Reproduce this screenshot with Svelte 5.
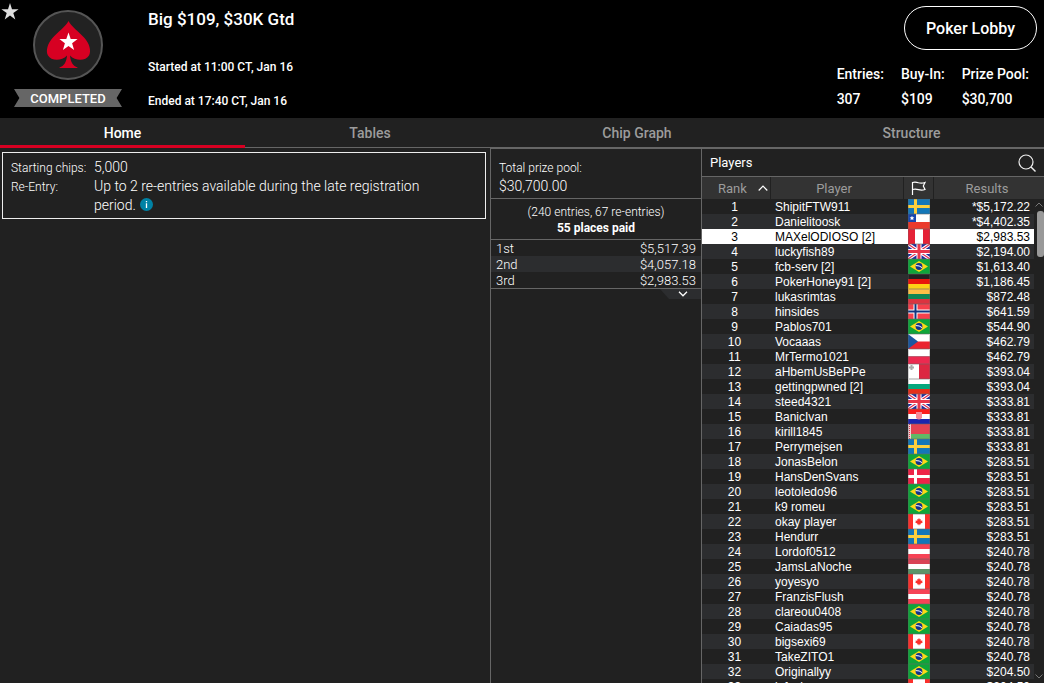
<script lang="ts">
  type Player = { name: string; flag: string; result: string };

  const tabs = ['Home', 'Tables', 'Chip Graph', 'Structure'];
  let activeTab = $state('Home');
  let selectedRank = $state(3);

  const summary = [
    { label: 'Entries:', value: '307' },
    { label: 'Buy-In:', value: '$109' },
    { label: 'Prize Pool:', value: '$30,700' },
  ];

  const payouts = [
    { place: '1st', amount: '$5,517.39' },
    { place: '2nd', amount: '$4,057.18' },
    { place: '3rd', amount: '$2,983.53' },
  ];

  const players: Player[] = [
    { name: 'ShipitFTW911', flag: 'se', result: '*$5,172.22' },
    { name: 'Danielitoosk', flag: 'cl', result: '*$4,402.35' },
    { name: 'MAXelODIOSO [2]', flag: 'pe', result: '$2,983.53' },
    { name: 'luckyfish89', flag: 'gb', result: '$2,194.00' },
    { name: 'fcb-serv [2]', flag: 'br', result: '$1,613.40' },
    { name: 'PokerHoney91 [2]', flag: 'de', result: '$1,186.45' },
    { name: 'lukasrimtas', flag: 'lt', result: '$872.48' },
    { name: 'hinsides', flag: 'no', result: '$641.59' },
    { name: 'Pablos701', flag: 'br', result: '$544.90' },
    { name: 'Vocaaas', flag: 'cz', result: '$462.79' },
    { name: 'MrTermo1021', flag: 'pl', result: '$462.79' },
    { name: 'aHbemUsBePPe', flag: 'mt', result: '$393.04' },
    { name: 'gettingpwned [2]', flag: 'bg', result: '$393.04' },
    { name: 'steed4321', flag: 'gb', result: '$333.81' },
    { name: 'BanicIvan', flag: 'hr', result: '$333.81' },
    { name: 'kirill1845', flag: 'by', result: '$333.81' },
    { name: 'Perrymejsen', flag: 'se', result: '$333.81' },
    { name: 'JonasBelon', flag: 'br', result: '$283.51' },
    { name: 'HansDenSvans', flag: 'dk', result: '$283.51' },
    { name: 'leotoledo96', flag: 'br', result: '$283.51' },
    { name: 'k9 romeu', flag: 'br', result: '$283.51' },
    { name: 'okay player', flag: 'ca', result: '$283.51' },
    { name: 'Hendurr', flag: 'se', result: '$283.51' },
    { name: 'Lordof0512', flag: 'at', result: '$240.78' },
    { name: 'JamsLaNoche', flag: 'hu', result: '$240.78' },
    { name: 'yoyesyo', flag: 'ca', result: '$240.78' },
    { name: 'FranzisFlush', flag: 'at', result: '$240.78' },
    { name: 'clareou0408', flag: 'br', result: '$240.78' },
    { name: 'Caiadas95', flag: 'br', result: '$240.78' },
    { name: 'bigsexi69', flag: 'ca', result: '$240.78' },
    { name: 'TakeZITO1', flag: 'br', result: '$240.78' },
    { name: 'Originallyy', flag: 'br', result: '$204.50' },
    { name: 'jofosho', flag: 'ca', result: '$204.50' },
  ];

  // Horizontal bands, top to bottom
  const bands: Record<string, string[]> = {
    de: ['#222', '#e8150c', '#fdd116'],
    lt: ['#fdbf47', '#108654', '#dc3340'],
    pl: ['#fff', '#ec2a50'],
    bg: ['#fff', '#04a77c', '#e5301b'],
    hr: ['#fc1c1c', '#fff', '#1c25ae'],
    at: ['#f64356', '#fff', '#f64356'],
    hu: ['#d94356', '#fff', '#5b9468'],
  };

  // Nordic crosses: field, cross and optional inner cross
  const crosses: Record<string, string[]> = {
    se: ['#1477b8', '#fccf3d'],
    dk: ['#ee2348', '#fff'],
    no: ['#f6404c', '#fff', '#10357f'],
  };
</script>

{#snippet flagIcon(code: string)}
  <svg class="flag" viewBox="0 0 22 15" preserveAspectRatio="none" aria-hidden="true">
    {#if bands[code]}
      {#each bands[code] as color, i}
        <rect y={(15 / bands[code].length) * i} width="22" height={15 / bands[code].length} fill={color} />
      {/each}
      {#if code === 'hr'}
        <path d="M8 3h6v6q-3 3-6 0z" fill="#f58a98" />
      {/if}
    {:else if crosses[code]}
      <rect width="22" height="15" fill={crosses[code][0]} />
      <path d="M7.5 0v15M0 7.5h22" stroke={crosses[code][1]} stroke-width={code === 'no' ? 4 : 3} />
      {#if crosses[code][2]}
        <path d="M7.5 0v15M0 7.5h22" stroke={crosses[code][2]} stroke-width="2" />
      {/if}
    {:else if code === 'cl'}
      <rect width="22" height="15" fill="#fff" />
      <rect y="8" width="22" height="7" fill="#ea3a2c" />
      <rect width="8" height="8" fill="#1646ae" />
      <path d="M4 1.8l.7 1.5 1.7.1-1.3 1.1.4 1.7L4 5.3l-1.5.9.4-1.7-1.3-1.1 1.7-.1z" fill="#fff" />
    {:else if code === 'pe'}
      <rect width="22" height="15" fill="#e52237" />
      <rect x="7" width="8" height="15" fill="#fff" />
    {:else if code === 'gb'}
      <rect width="22" height="15" fill="#1d2c9c" />
      <path d="M0 0l22 15M22 0L0 15" stroke="#fff" stroke-width="3.4" />
      <path d="M0 0l22 15M22 0L0 15" stroke="#e0284a" stroke-width="1.1" />
      <path d="M11 0v15M0 7.5h22" stroke="#fff" stroke-width="5" />
      <path d="M11 0v15M0 7.5h22" stroke="#e8354a" stroke-width="3" />
    {:else if code === 'br'}
      <rect width="22" height="15" fill="#0fa53a" />
      <path d="M11 2l9 5.5-9 5.5-9-5.5z" fill="#fbd918" />
      <circle cx="11" cy="7.5" r="3.4" fill="#12328c" />
      <path d="M7.8 6.6q3.6-.3 6.2 2" stroke="#fff" stroke-width="1" fill="none" />
    {:else if code === 'cz'}
      <rect width="22" height="15" fill="#fff" />
      <rect y="7.5" width="22" height="7.5" fill="#ea2430" />
      <path d="M0 0l10 7.5L0 15z" fill="#1b569e" />
    {:else if code === 'mt'}
      <rect width="22" height="15" fill="#fff" />
      <rect x="11" width="11" height="15" fill="#dc2742" />
      <path d="M3.5 1v5M1 3.5h5" stroke="#aaa" stroke-width="2" />
    {:else if code === 'by'}
      <rect width="22" height="15" fill="#e44352" />
      <rect y="10" width="22" height="5" fill="#60b966" />
      <rect width="3" height="15" fill="#f4d4d6" />
      <path d="M1.5 0v15" stroke="#d83a4b" stroke-dasharray="1 1" />
    {:else if code === 'ca'}
      <rect width="22" height="15" fill="#fff" />
      <path d="M0 0h5v15H0zM17 0h5v15h-5z" fill="#fb302c" />
      <path
        d="M11 4l.9 1.4.9-.3-.1 1.6 1.8-.2-.4 1 .8.7-2.4 1.6.1.8-1.4-.2v1h-.4v-1l-1.4.2.1-.8-2.4-1.6.8-.7-.4-1 1.8.2-.1-1.6.9.3z"
        fill="#fb302c"
      />
    {/if}
    <rect x=".5" y=".5" width="21" height="14" fill="none" stroke="#666" stroke-opacity=".3" />
  </svg>
{/snippet}

<div class="lobby">
  <header class="top">
    <button type="button" class="favorite" aria-label="Add to favorites">
      <svg width="18" height="18" viewBox="0 0 18 18" aria-hidden="true">
        <path d="M9 0l2 6.2h6.6l-5.3 3.9 2 6.4L9 12.6l-5.3 3.9 2-6.4L.4 6.2H7z" fill="#dedede" />
      </svg>
    </button>

    <div class="badge">
      <svg width="70" height="70" viewBox="0 0 70 70" aria-hidden="true">
        <circle cx="35" cy="35" r="34" fill="#222" stroke="#555" stroke-width="2" />
        <path
          d="M35.5 11C38 16 46 22 51.5 28C56.5 33.5 58.5 41 56 45.5C53 51 42.5 51.5 37 45.5C37.5 52 40 56 44.5 57.5V58H26.5V57.5C31 56 33.5 52 34 45.5C28.5 51.5 18 51 15 45.5C12.5 41 14.5 33.5 19.5 28C25 22 33 16 35.5 11Z"
          fill="#d70022"
        />
        <path d="M35.5 22.5l2.2 6.5h6.9l-5.5 4.2 2 6.8-5.6-4.1-5.6 4.1 2-6.8-5.5-4.2h6.9z" fill="#fff" />
      </svg>
      <span class="status">COMPLETED</span>
    </div>

    <div class="details">
      <h1>Big $109, $30K Gtd</h1>
      <p>Started at 11:00 CT, Jan 16</p>
      <p>Ended at 17:40 CT, Jan 16</p>
    </div>

    <div class="overview">
      <button type="button" class="lobby-button">Poker Lobby</button>
      <dl class="summary">
        {#each summary as item}
          <div>
            <dt>{item.label}</dt>
            <dd>{item.value}</dd>
          </div>
        {/each}
      </dl>
    </div>
  </header>

  <nav class="tabs">
    {#each tabs as tab}
      <button type="button" class:active={activeTab === tab} onclick={() => (activeTab = tab)}>{tab}</button>
    {/each}
  </nav>

  <main class="content">
    <section class="info">
      <dl class="rules">
        <dt>Starting chips:</dt>
        <dd>5,000</dd>
        <dt>Re-Entry:</dt>
        <dd>
          Up to 2 re-entries available during the late registration period.
          <button type="button" class="hint" aria-label="Re-entry information">
            <svg width="13" height="13" viewBox="0 0 13 13" aria-hidden="true">
              <circle cx="6.5" cy="6.5" r="6.5" fill="#0082a5" />
              <path d="M6.5 5.3V10M6.5 3v1.3" stroke="#fff" stroke-width="1.3" />
            </svg>
          </button>
        </dd>
      </dl>
    </section>

    <section class="prizes">
      <div class="pool">
        <p class="pool-label">Total prize pool:</p>
        <p>$30,700.00</p>
      </div>
      <div class="entries">
        <p>(240 entries, 67 re-entries)</p>
        <p><strong>55 places paid</strong></p>
      </div>
      <table class="payouts">
        <tbody>
          {#each payouts as payout}
            <tr>
              <td>{payout.place}</td>
              <td>{payout.amount}</td>
            </tr>
          {/each}
        </tbody>
      </table>
      <button type="button" class="expand" aria-label="Show all payouts">
        <svg width="10" height="6" viewBox="0 0 10 6" aria-hidden="true">
          <path d="M1 .8l4 4 4-4" fill="none" stroke="#fff" stroke-width="1.3" />
        </svg>
      </button>
    </section>

    <section class="players">
      <div class="players-bar">
        <h2>Players</h2>
        <button type="button" class="search" aria-label="Search players">
          <svg width="18" height="18" viewBox="0 0 18 18" aria-hidden="true">
            <circle cx="8" cy="8" r="7" fill="none" stroke="#eee" stroke-width="1.2" />
            <path d="M13 13l4.5 4.5" stroke="#eee" stroke-width="1.4" />
          </svg>
        </button>
      </div>
      <div class="list">
        <table class="ranking">
          <thead>
            <tr>
              <th class="rank">
                <span class="sort">
                  Rank
                  <svg width="10" height="6" viewBox="0 0 10 6" aria-hidden="true">
                    <path d="M.7 5.5L5 1.2l4.3 4.3" fill="none" stroke="#fff" stroke-width="1.2" />
                  </svg>
                </span>
              </th>
              <th class="name">Player</th>
              <th class="country" aria-label="Country">
                <svg width="15" height="14" viewBox="0 0 15 14" aria-hidden="true">
                  <path
                    d="M1.5 14V1.5C4 .5 5.5 1 7.5 1.7C9.5 2.3 11.5 2.3 14 1.5L12.3 5L14 8.5C11.5 9.3 9.5 9.2 7.5 8.6C5.5 8 4 7.7 1.5 8.5"
                    fill="none"
                    stroke="#fff"
                    stroke-width="1.2"
                  />
                </svg>
              </th>
              <th class="result">Results</th>
            </tr>
          </thead>
          <tbody>
            {#each players as player, i}
              <tr class:selected={selectedRank === i + 1} onclick={() => (selectedRank = i + 1)}>
                <td class="rank">{i + 1}</td>
                <td class="name">{player.name}</td>
                <td class="country">{@render flagIcon(player.flag)}</td>
                <td class="result">{player.result}</td>
              </tr>
            {/each}
          </tbody>
        </table>
        <div class="scrollbar" aria-hidden="true">
          <svg width="8" height="5" viewBox="0 0 8 5"><path d="M.5 4.5L4 1l3.5 3.5" /></svg>
          <div class="thumb"></div>
          <svg class="down" width="8" height="5" viewBox="0 0 8 5"><path d="M.5.5L4 4 7.5.5" /></svg>
        </div>
      </div>
    </section>
  </main>
</div>

<style>
  :global(body) {
    background: #212121;
  }

  .lobby {
    display: flex;
    flex-direction: column;
    height: 100vh;
    overflow: hidden;
    color: #fff;
    background: #212121;
    font-family: Roboto, 'Liberation Sans', sans-serif;
    font-size: 14px;
  }

  h1,
  h2,
  p,
  dl,
  dd {
    margin: 0;
  }

  button {
    padding: 0;
    border: none;
    background: none;
    color: inherit;
    font: inherit;
    cursor: pointer;
  }

  svg {
    display: block;
  }

  /* Header */
  .top {
    display: flex;
    height: 118px;
    flex-shrink: 0;
    background: #000;
    font-weight: 500;
  }

  .favorite {
    align-self: flex-start;
    margin: 3px 0 0 1px;
    width: 13px;
  }

  .badge {
    display: flex;
    flex-direction: column;
    align-items: center;
    gap: 9px;
    padding-top: 10px;
    width: 108px;
  }

  .status {
    width: 100%;
    height: 18px;
    line-height: 19px;
    font-size: 13px;
    text-align: center;
    background: #666;
    clip-path: polygon(0 0, 100% 0, 95% 50%, 100% 100%, 0 100%, 5% 50%);
  }

  .details {
    flex: 1;
    padding: 7px 0 0 26px;
  }

  .details h1 {
    margin-bottom: 19px;
    font-size: 17px;
    font-weight: 500;
    line-height: 24px;
  }

  .details p {
    font-size: 12px;
    line-height: 34px;
  }

  .overview {
    display: flex;
    flex-direction: column;
    align-items: flex-end;
    padding: 6px 7px 0 0;
  }

  .lobby-button {
    height: 44px;
    padding: 0 21px;
    border: 1px solid #fff;
    border-radius: 22px;
    font-size: 16px;
    font-weight: 500;
  }

  .summary {
    display: flex;
    gap: 17px;
    margin: 12px 8px 0 0;
    line-height: 25px;
  }

  /* Tabs */
  .tabs {
    display: grid;
    grid-template-columns: 245fr 250fr 284fr 265fr;
    flex-shrink: 0;
    height: 30px;
    box-shadow: inset 0 -1px #666;
    background: #212121;
  }

  .tabs button {
    padding-top: 2px;
    border-bottom: 3px solid transparent;
    color: #9c9c9c;
    font-weight: 500;
  }

  .tabs .active {
    border-color: #d70022;
    color: #fff;
  }

  /* Home tab */
  .content {
    display: flex;
    flex: 1;
    min-height: 0;
  }

  .info {
    flex: 1;
    padding: 4px 4px 0 2px;
  }

  .rules {
    display: grid;
    grid-template-columns: 83px minmax(0, 350px);
    padding: 5px 8px 3px;
    border: 1px solid #eee;
    font-weight: 300;
    line-height: 19px;
  }

  .rules dt {
    padding-top: 1px;
    font-size: 12px;
    line-height: 18px;
  }

  .hint {
    display: inline-block;
    margin-left: 1px;
    vertical-align: -1px;
  }

  .prizes {
    width: 210px;
    border: solid #666;
    border-width: 1px 0 0 1px;
    font-weight: 300;
  }

  .pool {
    padding: 10px 8px 3px;
    line-height: 18px;
    border-bottom: 1px solid #666;
  }

  .pool-label {
    font-size: 12px;
  }

  .entries {
    padding: 5px 0 3px;
    border-bottom: 1px solid #666;
    font-size: 12px;
    line-height: 16px;
    text-align: center;
  }

  .entries strong {
    font-weight: 700;
  }

  .payouts {
    width: 100%;
    border-bottom: 1px solid #666;
    border-spacing: 0;
    font-size: 13px;
    line-height: 14px;
  }

  .payouts td {
    padding: 2px 5px 0;
  }

  .payouts td:last-child {
    text-align: right;
  }

  .payouts tr:nth-child(even) {
    background: #2c2d2f;
  }

  .expand {
    display: flex;
    justify-content: center;
    align-items: center;
    margin-left: auto;
    padding-left: 5px;
    width: 41px;
    height: 10px;
    background: #2c2d2f;
    clip-path: polygon(0 0, 100% 0, 100% 100%, 9px 100%);
  }

  /* Player list */
  .players {
    display: flex;
    flex-direction: column;
    width: 342px;
    border: solid #666;
    border-width: 1px 0 0 1px;
  }

  .players-bar {
    display: flex;
    align-items: center;
    justify-content: space-between;
    flex-shrink: 0;
    height: 27px;
    padding: 0 8px;
    border-bottom: 1px solid #666;
  }

  .players-bar h2 {
    font-size: 13px;
    font-weight: 400;
  }

  .list {
    display: flex;
    flex: 1;
    min-height: 0;
    overflow: hidden;
    background: linear-gradient(#333 22px, #212121 22px);
  }

  .ranking {
    flex: 1;
    align-self: flex-start;
    table-layout: fixed;
    border-spacing: 0;
    font-family: 'Liberation Sans', Arial, sans-serif;
    font-size: 12px;
    line-height: 13px;
  }

  .ranking th,
  .ranking td {
    box-sizing: border-box;
  }

  .ranking th {
    height: 22px;
    padding: 0;
    border-right: 1px solid #212121;
    background: #333;
    color: #9c9c9c;
    font-family: Roboto, 'Liberation Sans', sans-serif;
    font-size: 13px;
    font-weight: 400;
  }

  .ranking th:last-child {
    border-right: none;
  }

  .ranking th svg {
    margin: 0 auto;
  }

  .ranking .sort {
    display: flex;
    align-items: center;
    padding: 0 2px 0 16px;
  }

  .ranking .sort svg {
    margin-right: 0;
  }

  .ranking th.name {
    padding-right: 6px;
  }

  .ranking th.result {
    padding-left: 6px;
  }

  .ranking td {
    height: 15px;
    padding: 2px 0 0;
  }

  .ranking tbody tr:nth-child(even) {
    background: #2c2d2f;
  }

  .ranking tbody .selected {
    background: #fff;
    color: #000;
  }

  .rank {
    width: 69px;
  }

  .country {
    width: 30px;
  }

  .result {
    width: 100px;
  }

  .ranking td.rank {
    padding-right: 4px;
    text-align: center;
  }

  .ranking td.name {
    padding-left: 4px;
  }

  .ranking td.country {
    padding: 0;
  }

  .ranking td.result {
    padding-right: 4px;
    text-align: right;
  }

  .flag {
    width: 22px;
    height: 15px;
    margin: 0 auto;
  }

  .scrollbar {
    display: flex;
    flex-direction: column;
    align-items: center;
    width: 10px;
    padding: 25px 0 4px;
    box-sizing: border-box;
  }

  .scrollbar svg {
    flex-shrink: 0;
    fill: none;
    stroke: #777;
  }

  .scrollbar .down {
    margin-top: auto;
  }

  .thumb {
    width: 7px;
    height: 46px;
    margin: 4px 0 0 auto;
    border-radius: 3px;
    background: #999;
  }
</style>
